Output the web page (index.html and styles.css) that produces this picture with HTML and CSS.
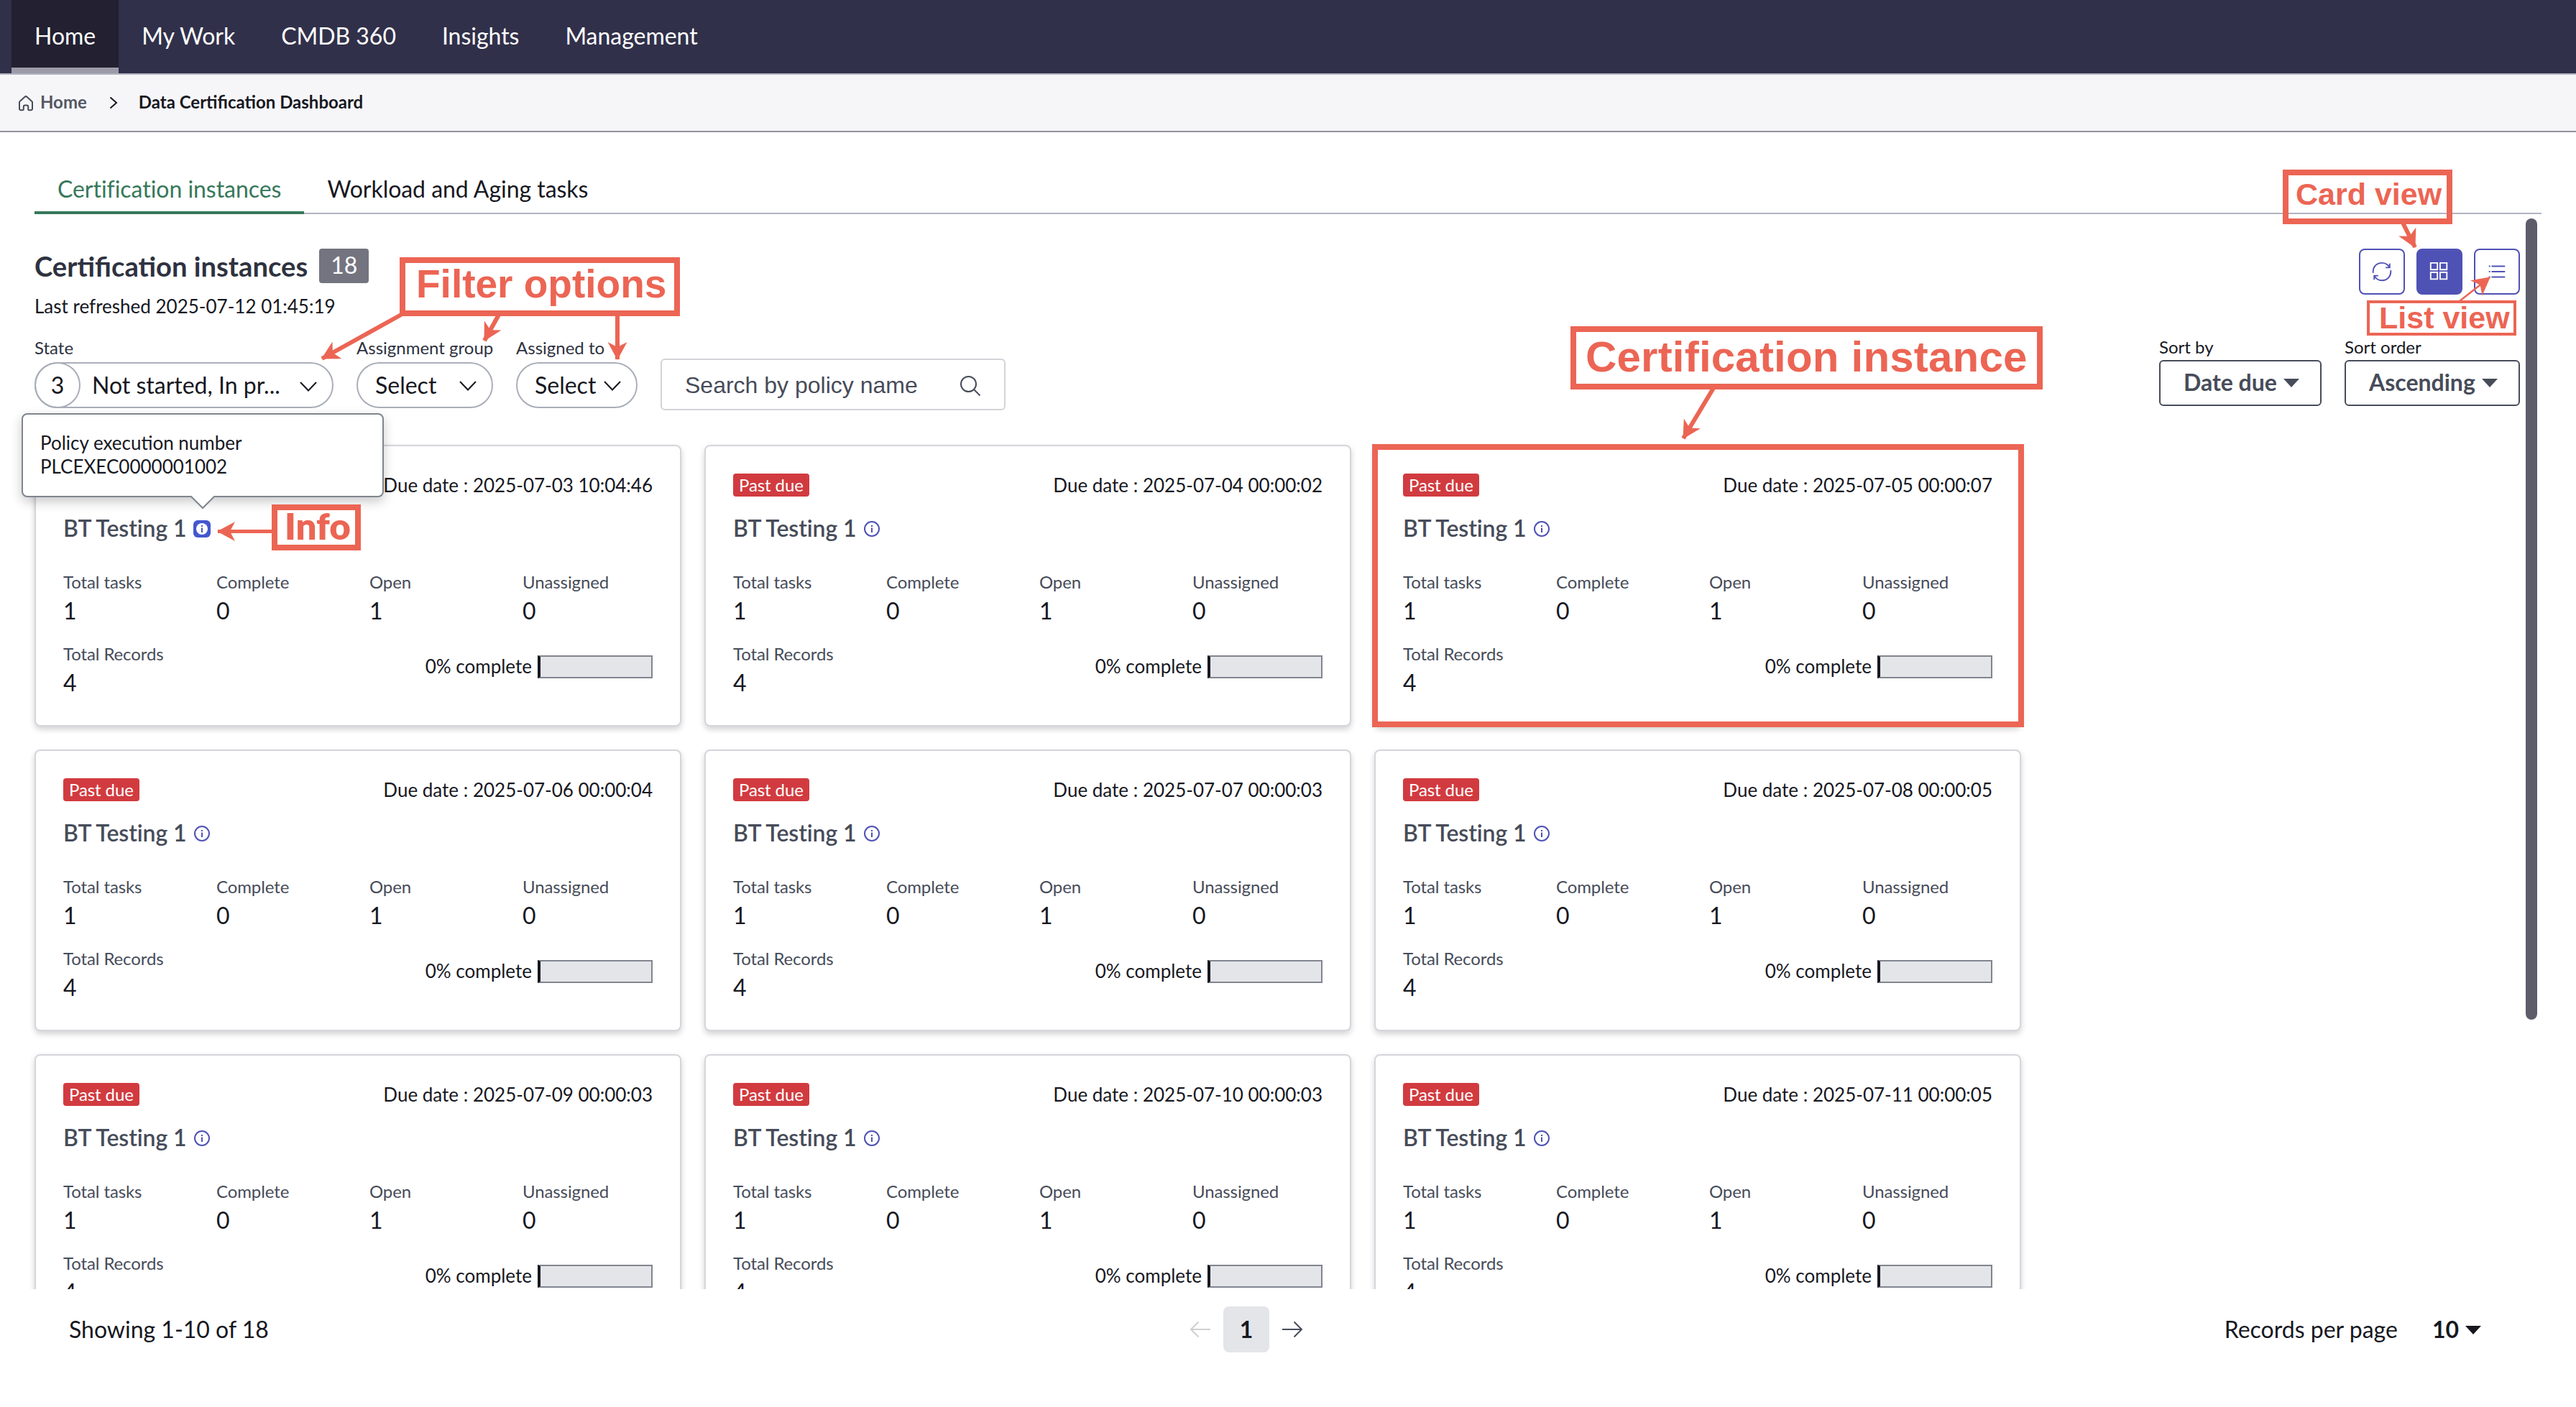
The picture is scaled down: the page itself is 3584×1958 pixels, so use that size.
FILE: index.html
```html
<!DOCTYPE html>
<html lang="en">
<head>
    <meta charset="UTF-8">
    <meta name="viewport" content="width=device-width, initial-scale=1.0">
    <title>Data Certification Dashboard</title>
    <link rel="stylesheet" href="styles.css">
</head>
<body>
    <nav class="navbar">
        <a class="nav-item active">Home</a>
        <a class="nav-item">My Work</a>
        <a class="nav-item">CMDB 360</a>
        <a class="nav-item">Insights</a>
        <a class="nav-item">Management</a>
    </nav>

    <div class="breadcrumb">
        <svg class="home-icon" width="22" height="22" viewBox="0 0 22 22"><path d="M2 9.5a2 2 0 0 1 .7-1.5L9.6 1.8a2 2 0 0 1 2.8 0L19.3 8a2 2 0 0 1 .7 1.5V18.5a1.8 1.8 0 0 1-1.8 1.8H15.5a1.3 1.3 0 0 1-1.3-1.3V15.5a2 2 0 0 0-2-2H9.8a2 2 0 0 0-2 2V19a1.3 1.3 0 0 1-1.3 1.3H3.8A1.8 1.8 0 0 1 2 18.5z"/></svg>
        <a class="crumb">Home</a>
        <svg class="crumb-arrow" width="12" height="18" viewBox="0 0 12 18"><path d="M1.5 1.5L10 9l-8.5 7.5"/></svg>
        <span class="crumb current">Data Certification Dashboard</span>
    </div>

    <main class="content">
        <div class="tabs">
            <a class="tab active">Certification instances</a>
            <a class="tab">Workload and Aging tasks</a>
        </div>

        <section class="toolbar">
            <div class="toolbar-left">
                <div class="title-row">
                    <h1>Certification instances</h1>
                    <span class="count">18</span>
                </div>
                <p class="refreshed">Last refreshed 2025-07-12 01:45:19</p>
                <div class="filters">
                    <div class="filter state">
                        <label>State</label>
                        <div class="pill">
                            <span class="pill-count">3</span>
                            <span class="pill-text">Not started, In pr...</span>
                            <svg class="chevron" width="26" height="16" viewBox="0 0 26 16"><path d="M2 2l11 11.5L24 2"/></svg>
                        </div>
                    </div>
                    <div class="filter group">
                        <label>Assignment group</label>
                        <div class="pill">
                            <span class="pill-text">Select</span>
                            <svg class="chevron" width="26" height="16" viewBox="0 0 26 16"><path d="M2 2l11 11.5L24 2"/></svg>
                        </div>
                    </div>
                    <div class="filter assigned">
                        <label>Assigned to</label>
                        <div class="pill">
                            <span class="pill-text">Select</span>
                            <svg class="chevron" width="26" height="16" viewBox="0 0 26 16"><path d="M2 2l11 11.5L24 2"/></svg>
                        </div>
                    </div>
                    <div class="search">
                        <span>Search by policy name</span>
                        <svg width="30" height="30" viewBox="0 0 30 30"><circle cx="12.5" cy="12.5" r="10.5"/><path d="M20 20l8.5 8.5"/></svg>
                    </div>
                </div>
            </div>

            <div class="toolbar-right">
                <div class="view-buttons">
                    <button class="icon-btn">
                        <svg width="32" height="32" viewBox="0 0 32 32"><path d="M3 18C2 9 8 3 16 3c5 0 9 2.5 11 6.500M27.5 4v6h-6M29 14c1 9-5 15-13 15-5 0-9-2.5-11-6.500M4.5 28v-6h6"/></svg>
                    </button>
                    <button class="icon-btn active">
                        <svg width="32" height="32" viewBox="0 0 32 32"><path d="M3 3h10v10H3zM17 3h10v10H17zM3 17h10v10H3zM17 17h10v10H17z"/></svg>
                    </button>
                    <button class="icon-btn">
                        <svg width="32" height="32" viewBox="0 0 32 32"><path d="M4 8h2M8 8h20M4 16h2M8 16h20M4 24h2M8 24h20"/></svg>
                    </button>
                </div>
                <div class="sorting">
                    <div class="sort sort-by">
                        <label>Sort by</label>
                        <button class="sort-btn">Date due <i class="caret"></i></button>
                    </div>
                    <div class="sort sort-order">
                        <label>Sort order</label>
                        <button class="sort-btn">Ascending <i class="caret"></i></button>
                    </div>
                </div>
            </div>
        </section>

        <section class="cards" id="cards"></section>

        <div class="scrollbar"></div>
    </main>

    <footer class="footer">
        <span class="showing">Showing 1-10 of 18</span>
        <div class="pager">
            <svg class="prev" width="30" height="24" viewBox="0 0 30 24"><path d="M29 12H2M12.5 1.5L2 12l10.5 10.5"/></svg>
            <span class="page">1</span>
            <svg class="next" width="30" height="24" viewBox="0 0 30 24"><path d="M1 12h27M17.5 1.5L28 12 17.5 22.5"/></svg>
        </div>
        <div class="per-page">
            <span>Records per page</span>
            <b>10</b>
            <i class="caret"></i>
        </div>
    </footer>

    <!-- Callouts over the dashboard -->
    <div class="callout card-view">Card view</div>
    <div class="callout list-view">List view</div>
    <div class="callout filter-options">Filter options</div>
    <div class="callout instance">Certification instance</div>
    <div class="callout info">Info</div>
    <div class="callout outline"></div>
    <svg class="arrows" width="3584" height="1958" viewBox="0 0 3584 1958">
        <defs>
            <marker id="head" markerUnits="userSpaceOnUse" markerWidth="26" markerHeight="28" refX="24" refY="14" orient="auto">
                <path d="M0 0.5L25 14L0 27.5L7 14z"/>
            </marker>
        </defs>
        <path d="M558 438L448 499"/>
        <path d="M694 438L674 474"/>
        <path d="M859 438V500"/>
        <path d="M2384 540L2342 610"/>
        <path d="M3343 310L3360 344"/>
        <path class="thin" d="M3422 419L3464 386"/>
        <path class="medium" d="M382 739.5H303"/>
    </svg>

    <script>
        const dueDates = [
            '2025-07-03 10:04:46',
            '2025-07-04 00:00:02',
            '2025-07-05 00:00:07',
            '2025-07-06 00:00:04',
            '2025-07-07 00:00:03',
            '2025-07-08 00:00:05',
            '2025-07-09 00:00:03',
            '2025-07-10 00:00:03',
            '2025-07-11 00:00:05'
        ];

        const tooltip = `
            <div class="tooltip">
                Policy execution number<br>PLCEXEC0000001002
                <svg class="tooltip-tip" width="36" height="20" viewBox="0 0 36 20"><path d="M1 0L18 17L35 0"/></svg>
            </div>`;

        function stat(label, value) {
            return `<div class="stat"><span class="label">${label}</span><span class="value">${value}</span></div>`;
        }

        document.getElementById('cards').innerHTML = dueDates.map((date, i) => `
            <article class="card">
                <div class="card-top">
                    <span class="badge">Past due</span>
                    <span class="due">Due date : ${date}</span>
                </div>
                <div class="card-title">
                    BT Testing 1
                    <span class="info-btn ${i === 0 ? 'focused' : ''}">
                        <svg width="24" height="24" viewBox="0 0 24 24"><circle cx="12" cy="12" r="10"/><path d="M12 10.5V17M12 7v2"/></svg>
                    </span>
                </div>
                <div class="stats">
                    ${stat('Total tasks', 1)}${stat('Complete', 0)}${stat('Open', 1)}${stat('Unassigned', 0)}
                </div>
                <div class="card-bottom">
                    ${stat('Total Records', 4)}
                    <div class="progress">0% complete <div class="progress-bar"></div></div>
                </div>
                ${i === 0 ? tooltip : ''}
            </article>`).join('');
    </script>
</body>
</html>
```

FILE: styles.css
```css
:root {
    --nav-bg: #31304a;
    --text: #17181f;
    --text-muted: #474c59;
    --primary: #4f52b5;
    --green: #36785a;
    --danger: #d13b40;
    --callout: #ec6554;
}

* {
    margin: 0;
    padding: 0;
    box-sizing: border-box;
}

body {
    position: relative;
    height: 1958px;
    overflow: hidden;
    display: flex;
    flex-direction: column;
    font-family: Lato, "Liberation Sans", sans-serif;
    font-size: 32px;
    line-height: 40px;
    color: var(--text);
    background: #fff;
}

svg {
    fill: none;
    stroke: currentColor;
    stroke-width: 2;
    flex-shrink: 0;
}

button {
    font: inherit;
    color: inherit;
    background: #fff;
}

/* Navigation */
.navbar {
    display: flex;
    height: 104px;
    padding-left: 16px;
    background: var(--nav-bg);
    border-bottom: 2px solid #b0b3bd;
}

.nav-item {
    padding: 30px 32px 0;
    letter-spacing: -0.03px;
    color: #fff;
}

.nav-item.active {
    background: #222031;
    border-bottom: 8px solid #9d9ba8;
}

.breadcrumb {
    display: flex;
    align-items: center;
    height: 80px;
    padding: 0 25px 2px;
    font-size: 24px;
    font-weight: bold;
    line-height: 30px;
    background: #f6f6f9;
    border-bottom: 2px solid #90919e;
}

.home-icon {
    color: var(--text-muted);
    margin: 3px 9px 0 0;
}

.crumb {
    color: #545763;
}

.crumb-arrow {
    margin: 2px 29px 0 31px;
}

.crumb.current {
    color: var(--text);
}

/* Page body */
.content {
    position: relative;
    height: 1610px;
    padding: 0 48px;
}

.tabs {
    display: flex;
    align-items: flex-end;
    height: 114px;
    letter-spacing: -0.04px;
    box-shadow: inset 0 -2px #b0b5bf;
}

.tab {
    padding: 0 32px 11px;
    border-bottom: 4px solid transparent;
}

.tab.active {
    color: var(--green);
    border-color: var(--green);
}

.toolbar {
    display: flex;
    justify-content: space-between;
    height: 321px;
    padding: 48px 30px 0 0;
}

.title-row {
    display: flex;
    gap: 16px;
    height: 48px;
}

h1 {
    font-size: 38.2px;
    line-height: 49px;
    color: #2e3240;
}

.count {
    height: 48px;
    padding: 0 16px;
    line-height: 46px;
    color: #fff;
    background: #747480;
    border-radius: 4px;
}

.refreshed {
    margin-top: 15px;
    font-size: 26px;
    line-height: 34px;
}

.filters {
    display: flex;
    align-items: flex-end;
    gap: 32px;
    margin-top: 26px;
}

label {
    display: block;
    margin-bottom: 5px;
    font-size: 24px;
    line-height: 30px;
    white-space: nowrap;
    color: #2e3240;
}

.pill {
    display: flex;
    align-items: center;
    justify-content: space-between;
    height: 64px;
    padding: 0 20px 1px 24px;
    border: 2px solid #a9aeb8;
    border-radius: 32px;
}

.chevron {
    margin-top: 3px;
}

.state {
    width: 416px;
}

.state .pill {
    padding-left: 0;
    padding-bottom: 0;
}

.state .pill-text {
    flex: 1;
    padding: 0 0 1px 16px;
}

.pill-count {
    width: 64px;
    height: 64px;
    margin-left: -2px;
    line-height: 59px;
    text-align: center;
    border: 2px solid #a9aeb8;
    border-radius: 50%;
}

.group {
    width: 190px;
}

.assigned {
    width: 169px;
}

.search {
    display: flex;
    align-items: center;
    justify-content: space-between;
    width: 480px;
    height: 72px;
    margin-bottom: -3px;
    padding: 1px 32px 0;
    font-family: "Liberation Sans", Arial, sans-serif;
    color: var(--text-muted);
    border: 2px solid #d3d4d8;
    border-radius: 6px;
}

.search svg {
    margin-top: 3px;
}

.toolbar-right {
    display: flex;
    flex-direction: column;
    align-items: flex-end;
}

.view-buttons {
    display: flex;
    gap: 16px;
}

.icon-btn {
    display: flex;
    align-items: center;
    justify-content: center;
    width: 64px;
    height: 64px;
    color: var(--primary);
    border: 2px solid var(--primary);
    border-radius: 8px;
}

.icon-btn.active {
    color: #fff;
    background: var(--primary);
}

.icon-btn svg {
    width: 30px;
    height: 30px;
}

.sorting {
    display: flex;
    gap: 32px;
    margin-top: 58px;
}

.sort label {
    margin-bottom: 3px;
    color: var(--text);
}

.sort-btn {
    display: flex;
    align-items: center;
    height: 64px;
    padding: 0 0 3px 32px;
    font-weight: bold;
    white-space: nowrap;
    color: var(--text-muted);
    border: 2px solid var(--text-muted);
    border-radius: 6px;
}

.sort-by .sort-btn {
    width: 226px;
}

.sort-order .sort-btn {
    width: 244px;
}

.caret {
    margin: 2px 0 0 9px;
    border: 11px solid transparent;
    border-top: 12px solid currentColor;
    border-bottom: 0;
}

/* Cards */
.cards {
    display: grid;
    grid-template-columns: repeat(3, minmax(0, 1fr));
    grid-auto-rows: 392px;
    gap: 32px;
    width: 2764px;
    height: 1175px;
    clip-path: inset(-60px -60px 0 -60px);
}

.card {
    position: relative;
    padding: 38px;
    background: #fff;
    border: 2px solid #d5d6dc;
    border-radius: 8px;
    box-shadow: 0 4px 8px rgba(0, 0, 0, 0.18);
}

.card-top {
    display: flex;
    justify-content: space-between;
    height: 32px;
}

.badge {
    padding: 0 8px;
    font-size: 24px;
    line-height: 31px;
    letter-spacing: -0.1px;
    color: #fff;
    background: var(--danger);
    border-radius: 4px;
}

.due {
    font-size: 26px;
    line-height: 32px;
}

.card-title {
    display: flex;
    align-items: center;
    gap: 10px;
    margin-top: 24px;
    font-weight: 600;
    letter-spacing: -0.1px;
    color: var(--text-muted);
}

.info-btn {
    display: flex;
    margin-top: 2px;
    color: var(--primary);
    border-radius: 6px;
}

.info-btn.focused {
    background: #4457cf;
}

.info-btn.focused circle {
    fill: #fff;
    stroke: none;
    r: 8px;
}

.stats {
    display: grid;
    grid-template-columns: repeat(4, 213px);
    margin-top: 40px;
}

.label {
    display: block;
    font-size: 24px;
    line-height: 30px;
    letter-spacing: -0.1px;
    color: var(--text-muted);
}

.value {
    display: block;
    margin-top: 5px;
}

.card-bottom {
    display: flex;
    justify-content: space-between;
    margin-top: 25px;
}

.progress {
    display: flex;
    align-items: flex-start;
    gap: 8px;
    margin-top: 17px;
    font-size: 26px;
    line-height: 30px;
}

.progress-bar {
    width: 160px;
    height: 32px;
    background: #e4e5e9;
    border: 2px solid #81858f;
    border-left: 4px solid var(--text);
}

.tooltip {
    position: absolute;
    top: -46px;
    left: -20px;
    width: 504px;
    height: 117px;
    padding: 23px 24px;
    font-size: 26px;
    line-height: 33px;
    background: #fff;
    border: 2px solid #7f858f;
    border-radius: 8px;
    box-shadow: 0 6px 16px rgba(0, 0, 0, 0.22);
}

.tooltip-tip {
    position: absolute;
    top: 113px;
    left: 232px;
    fill: #fff;
    color: #7f858f;
}

.scrollbar {
    position: absolute;
    top: 120px;
    right: 54px;
    width: 16px;
    height: 1115px;
    background: #5e5c6b;
    border-radius: 8px;
}

/* Footer */
.footer {
    display: grid;
    grid-template-columns: 1fr auto 1fr;
    align-items: center;
    height: 112px;
    padding: 0 132px 0 96px;
}

.pager {
    display: flex;
    align-items: center;
    gap: 17px;
    margin-right: 80px;
}

.page {
    width: 64px;
    height: 64px;
    line-height: 63px;
    text-align: center;
    font-weight: bold;
    background: #e4e5e9;
    border-radius: 8px;
}

.prev {
    color: #cfd0d2;
}

.next {
    color: var(--text-muted);
}

.per-page {
    display: flex;
    align-items: center;
    justify-content: flex-end;
}

.per-page b {
    margin-left: 48px;
}

/* Callouts */
.callout {
    position: absolute;
    font-family: "Liberation Sans", Arial, sans-serif;
    font-weight: bold;
    white-space: nowrap;
    color: var(--callout);
    border: 8px solid var(--callout);
}

.card-view {
    left: 3176px;
    top: 236px;
    width: 236px;
    height: 76px;
    padding-left: 10px;
    font-size: 43px;
    line-height: 53px;
}

.list-view {
    left: 3293px;
    top: 418px;
    width: 208px;
    height: 49px;
    padding-left: 13px;
    font-size: 43px;
    line-height: 40px;
    border-width: 4px;
    background: #fff;
}

.filter-options {
    left: 556px;
    top: 358px;
    width: 390px;
    height: 82px;
    padding-left: 15px;
    font-size: 55px;
    line-height: 58px;
}

.instance {
    left: 2185px;
    top: 454px;
    width: 657px;
    height: 88px;
    padding-left: 13px;
    font-size: 60px;
    line-height: 69px;
    letter-spacing: 0.2px;
}

.info {
    left: 378px;
    top: 702px;
    width: 124px;
    height: 64px;
    padding-left: 10px;
    font-family: Lato, sans-serif;
    font-size: 51px;
    font-weight: 800;
    line-height: 43px;
    background: #fff;
}

.outline {
    left: 1909px;
    top: 618px;
    width: 907px;
    height: 394px;
}

.arrows {
    position: absolute;
    left: 0;
    top: 0;
    color: var(--callout);
    stroke-width: 6;
}

.arrows path {
    marker-end: url(#head);
}

.arrows marker path {
    fill: var(--callout);
    stroke: none;
    marker-end: none;
}

.arrows .medium {
    stroke-width: 5;
}

.arrows .thin {
    stroke-width: 2.5;
}
```
